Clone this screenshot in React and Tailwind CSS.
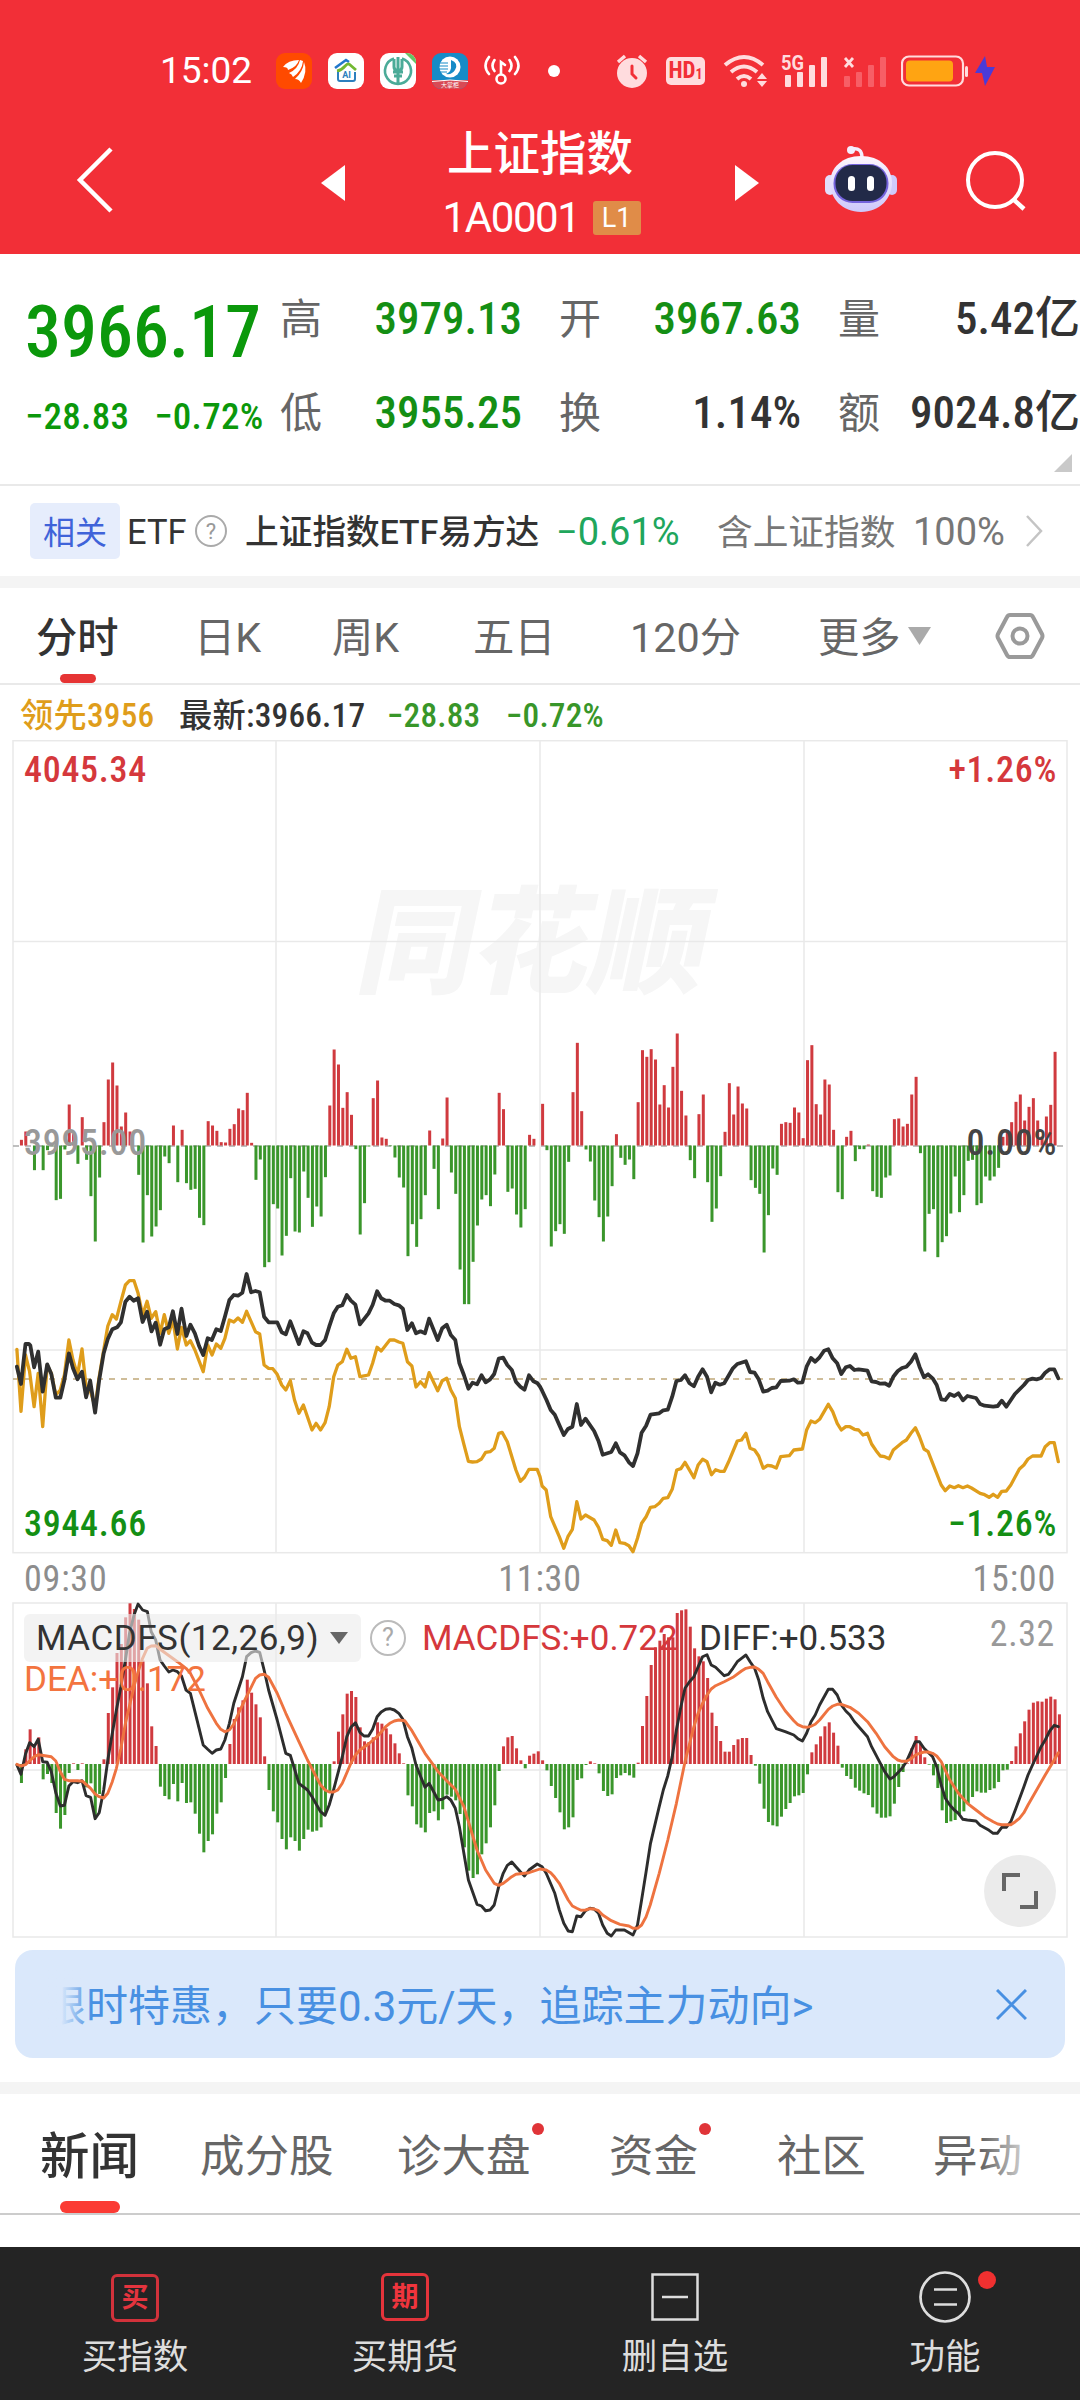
import React, { useState } from 'react';

// Minute by minute market breadth, above zero red, below zero green
const breadth = [
  0, 17, 42, 0, -74, 0, -74, -14, -2, -164, -160, -12, 123, 35, -55, 85, -43, -152, -288, -96,
  70, 198, 249, 180, 57, 99, 42, 0, -88, -291, -149, -273, -243, -194, -33, -53, 60, -110, 47, -113,
  -133, -130, -217, -239, 73, 60, 44, 10, 9, 50, 64, 111, 106, 158, 8, -103, -42, -365, -350, -176,
  -189, -330, -271, -98, -258, -261, -78, -157, -244, -183, -213, -95, 120, 288, 243, 113, 160, 92, -11, -267,
  -173, -3, 142, 195, 24, 20, -2, -36, -96, -126, -332, -236, -304, -221, -149, 45, -70, -191, 21, 144,
  -81, -145, -372, -476, -476, -349, -240, -162, -149, -182, -87, 158, 109, -139, -129, -207, -246, -191, 32, 20,
  0, 125, -14, -303, -257, -236, -265, -49, 160, 308, 103, -12, -48, -165, -215, -288, -213, -122, 34, -37,
  -58, -42, -101, 130, 286, 266, 289, 258, 123, 181, 114, 236, 336, 164, 90, -44, -98, 94, 153, -110,
  -229, -189, -92, 41, 187, 93, 177, 126, 111, -104, -127, -145, -321, -209, -69, -88, 65, 70, 68, 114,
  99, 22, 256, 301, 124, 93, 198, 183, 47, -140, -161, 26, 44, -47, -11, -11, 3, -137, -154, -157,
  -96, -90, 79, 81, 57, 65, 153, 206, -23, -318, -205, -191, -335, -290, -272, -204, -93, -200, -149, -46,
  -43, -179, -173, -93, -105, -93, -67, 26, 44, 70, 131, 153, 75, 116, 142, 75, 27, 87, 122, 281,
];

const macd = [
  0, -57, 44, 104, 50, 80, -46, -30, -57, -147, -194, -153, -27, 2, -18, 2, -70, -58, -160, -90,
  14, 153, 230, 333, 360, 440, 482, 465, 433, 310, 242, 113, 54, -68, -96, -106, -60, -112, -57, -117,
  -115, -149, -209, -265, -231, -211, -149, -115, -42, 60, 135, 170, 191, 253, 214, 179, 140, 23, -78, -142,
  -175, -225, -256, -220, -231, -260, -225, -197, -203, -200, -190, -150, -84, 8, 97, 149, 211, 219, 201, 110,
  68, 66, 80, 125, 121, 107, 89, 62, 32, 2, -94, -127, -181, -191, -205, -147, -142, -169, -136, -92,
  -98, -109, -150, -250, -320, -342, -331, -271, -238, -190, -124, -21, 53, 80, 84, 47, 11, -13, 25, 31,
  38, 11, -19, -66, -102, -145, -196, -190, -160, -48, -43, -3, 8, 2, -28, -81, -96, -91, -42, -34,
  -27, -34, -41, 4, 114, 204, 297, 350, 370, 390, 380, 380, 453, 461, 464, 412, 347, 323, 308, 258,
  154, 114, 69, 37, 37, 57, 74, 78, 78, 27, -5, -59, -134, -174, -184, -187, -158, -135, -117, -97,
  -94, -87, -31, 35, 59, 83, 113, 125, 94, 55, -11, -36, -45, -71, -80, -88, -93, -130, -149, -161,
  -161, -157, -119, -69, -24, 2, 47, 84, 60, 20, -2, -34, -72, -139, -177, -172, -168, -150, -142, -119,
  -99, -82, -86, -86, -78, -73, -54, -19, -17, 9, 53, 92, 128, 163, 184, 188, 187, 196, 202, 194, 149,
];

// Each line is kept as its morning and its afternoon session
const price = [
  '49,380 61,432 74,312 84,312 88,316 99,382 111,335 124,455 137,373 149,402 162,473 175,473 187,420 200,340 212,385 225,418 238,395 250,472 262,422 276,518 288,420 301,340 313,297 326,268 340,262 351,247 364,185 376,170 388,182 401,175 414,246 427,215 440,274 452,248 465,314 477,268 490,262 502,214 515,282 527,206 541,288 553,254 566,280 578,318 590,345 603,295 615,300 628,268 641,273 653,230 666,180 679,165 691,167 704,158 716,102 729,157 742,153 754,157 767,230 780,247 805,247 818,277 830,283 843,244 868,312 881,274 893,280 906,308 918,315 931,315 944,300 956,260 969,220 981,200 994,196 1007,165 1019,182 1032,194 1045,253 1070,220 1082,195 1095,154 1107,175 1120,182 1132,182 1145,192 1158,196 1170,206 1183,270 1196,250 1208,280 1221,274 1234,280 1246,236 1271,300 1284,265 1297,254 1309,285 1322,300 1334,370 1347,405 1360,446 1372,428 1385,433 1398,406 1410,427 1423,418 1435,402 1448,356 1461,353 1473,375 1486,390 1498,425 1511,440 1523,449 1536,406 1549,424 1561,430',
  '0,440 6,452 19,480 31,510 43,524 56,555 69,585 81,567 94,560 107,492 119,555 132,536 157,573 170,603 182,644 207,636 220,610 232,637 245,646 258,667 270,678 283,640 295,578 308,557 321,524 346,520 358,511 371,509 384,470 396,423 409,420 421,406 434,430 447,439 459,410 472,388 485,410 497,457 509,428 522,434 535,430 560,385 573,372 598,364 610,396 623,398 635,418 648,455 661,452 673,444 686,442 699,423 724,422 737,418 749,428 762,427 774,380 787,354 799,365 812,352 825,332 837,328 850,355 863,370 875,402 888,382 900,378 913,390 925,388 951,392 963,424 976,426 988,431 1001,430 1014,437 1026,410 1039,393 1051,384 1064,380 1077,365 1090,343 1102,380 1115,412 1127,403 1140,415 1152,435 1165,478 1177,480 1190,462 1203,468 1215,460 1228,481 1241,468 1266,474 1278,492 1291,497 1316,500 1329,498 1341,482 1354,500 1379,462 1405,435 1417,420 1430,416 1442,418 1455,414 1467,398 1480,388 1493,388 1505,415',
];

const leading = [
  '49,328 61,514 74,345 86,395 99,500 111,400 124,560 137,375 149,400 162,465 175,450 187,405 200,300 212,360 225,405 238,327 250,440 263,455 276,500 288,410 301,330 313,258 326,224 338,237 351,185 364,135 376,122 389,122 401,160 414,225 427,184 439,235 452,215 465,280 477,224 490,280 502,240 515,327 527,262 541,315 553,302 566,330 590,395 603,315 616,345 628,312 641,325 653,295 666,240 679,246 691,234 704,247 716,214 742,275 754,282 767,375 780,385 792,386 805,403 818,435 830,450 843,422 855,480 868,520 881,495 906,570 918,550 931,570 944,548 956,500 969,410 981,375 994,365 1007,328 1019,355 1032,350 1045,410 1070,405 1082,370 1095,322 1107,333 1132,300 1145,300 1158,306 1170,310 1183,365 1196,378 1208,441 1221,425 1234,441 1246,398 1271,452 1284,422 1297,415 1309,450 1322,475 1334,560 1347,613 1360,664 1372,666 1385,665 1398,657 1410,637 1423,635 1435,625 1448,580 1458,577 1473,605 1498,690 1511,724 1523,712 1536,688 1560,688',
  '0,710 6,738 18,750 31,830 56,890 69,925 81,890 94,868 107,785 119,837 132,825 157,840 170,862 182,898 195,902 207,916 220,870 232,908 245,910 258,917 270,935 283,895 295,850 308,830 321,802 333,800 346,790 358,775 371,773 384,748 397,690 409,686 421,667 447,713 459,675 472,658 485,665 498,704 510,689 522,694 535,694 547,667 573,603 585,600 598,580 610,625 623,630 635,648 648,685 661,676 673,678 686,684 699,650 724,647 737,630 762,627 774,570 787,543 799,548 812,538 837,493 850,515 863,550 875,570 888,560 900,560 913,568 925,570 938,585 951,580 963,612 976,632 988,648 1001,650 1014,656 1026,630 1051,608 1064,600 1077,580 1090,563 1102,590 1115,627 1127,635 1165,735 1177,752 1190,738 1203,743 1215,737 1228,743 1241,738 1253,744 1278,760 1291,764 1304,772 1316,763 1329,772 1341,754 1354,753 1367,735 1392,687 1405,675 1417,657 1430,648 1455,648 1467,620 1480,608 1493,608 1505,665',
];

const diff = [
  '49,525 61,553 74,492 86,458 99,470 111,448 124,515 137,517 149,545 162,608 175,648 187,646 200,588 212,575 225,578 238,572 250,617 263,622 276,686 288,668 301,600 313,510 326,430 338,360 351,290 364,210 376,130 389,75 401,42 414,60 428,65 439,125 452,150 465,210 477,228 490,246 502,240 515,245 527,258 540,300 553,310 578,415 590,465 603,478 616,490 628,480 641,477 653,450 666,400 679,340 704,260 716,200 729,188 742,183 754,187 767,240 780,300 805,390 830,490 843,496 868,580 893,600 906,620 931,665 944,676 956,645 969,598 994,500 1007,440 1019,412 1032,398 1045,427 1057,438 1070,438 1082,418 1095,380 1107,366 1120,358 1132,356 1145,360 1158,370 1170,388 1183,440 1196,475 1208,525 1234,592 1246,580 1272,630 1284,628 1297,620 1309,630 1322,655 1334,710 1360,870 1385,943 1398,948 1410,962 1423,960 1435,945 1448,890 1461,850 1473,826 1486,816 1498,830 1511,845 1523,858 1536,840 1560,822',
  '6,830 18,850 43,910 56,960 69,1000 82,1023 94,1025 107,978 119,980 132,962 145,955 157,957 170,970 182,1005 195,1030 207,1038 220,1020 245,1020 270,1035 283,1005 295,930 308,845 321,760 345,655 358,600 371,557 384,500 396,420 409,350 421,295 434,275 447,260 472,200 485,194 497,225 510,232 535,257 547,253 560,235 573,215 585,205 598,195 610,215 623,235 635,270 648,325 661,365 686,416 712,425 737,435 749,446 762,453 774,430 787,395 799,375 812,345 837,298 850,298 863,315 875,345 888,363 900,375 913,395 951,440 963,470 1001,545 1016,567 1026,562 1039,548 1051,535 1064,515 1077,485 1090,455 1102,455 1115,475 1140,500 1152,530 1165,585 1177,625 1190,645 1203,660 1215,670 1228,688 1241,690 1266,693 1278,706 1304,721 1316,730 1328,730 1341,712 1354,712 1367,695 1380,660 1405,590 1417,555 1430,525 1455,470 1467,450 1480,423 1493,406 1505,410',
];

const dea = [
  '49,523 61,528 74,524 99,500 112,494 149,500 162,513 175,545 187,568 200,572 225,572 240,574 263,595 276,612 288,620 301,624 313,610 326,575 338,535 351,475 364,400 389,290 401,245 414,205 427,175 439,168 452,167 465,178 515,215 540,235 553,250 578,300 603,355 628,400 641,418 653,425 666,420 679,402 704,345 729,292 742,265 754,255 767,253 780,262 805,310 830,370 868,455 893,510 918,560 931,585 944,600 956,606 969,606 981,600 994,580 1019,520 1032,495 1045,480 1070,462 1095,440 1120,410 1132,400 1145,393 1158,390 1175,392 1196,422 1234,490 1272,545 1297,572 1322,598 1347,650 1385,780 1410,840 1435,880 1448,886 1461,880 1486,860 1498,853 1523,850 1536,848',
  '0,837 18,840 31,848 43,862 56,880 82,930 94,948 107,955 119,961 132,960 145,956 157,957 170,962 182,975 207,992 232,1003 258,1008 270,1015 283,1015 295,1005 308,980 320,945 346,850 371,750 396,640 421,515 447,410 459,370 472,340 485,315 497,297 510,287 535,275 560,262 585,243 598,235 610,232 623,231 635,238 648,250 661,275 686,322 712,362 737,392 749,404 762,410 774,412 787,409 799,403 812,390 837,358 850,348 863,343 875,343 900,352 925,370 951,395 976,430 1001,470 1026,500 1039,510 1051,514 1064,514 1077,507 1090,495 1102,490 1115,486 1127,486 1140,490 1152,498 1165,515 1190,570 1215,610 1241,640 1266,660 1291,680 1316,695 1329,702 1341,704 1367,704 1380,695 1392,685 1405,668 1417,645 1442,600 1467,555 1493,510 1505,488',
];

// session units -> chart pixels
const UNIT = 1080 / 3136;
const toPoints = ([morning, afternoon], top) => {
  const read = (s, dx) =>
    s.split(' ').map((p) => {
      const [x, y] = p.split(',').map(Number);
      return `${((x + dx) * UNIT).toFixed(1)},${(y / 3 + top).toFixed(1)}`;
    });
  return [...read(morning, 0), ...read(afternoon, 1568)].join(' ');
};

const Bars = ({ data, zero }) => (
  <g>
    {data.map((v, i) =>
      v === 0 ? null : (
        <rect
          key={i}
          x={15.6 + i * 4.343}
          y={v > 0 ? zero - v / 3 : zero}
          width="3"
          height={Math.abs(v) / 3}
          fill={v > 0 ? '#d03a3f' : '#3a962b'}
        />
      )
    )}
  </g>
);

const Line = ({ data, top, color, width }) => (
  <polyline
    points={toPoints(data, top)}
    fill="none"
    stroke={color}
    strokeWidth={width}
    strokeLinejoin="round"
    strokeLinecap="round"
  />
);

const StatusBar = () => (
  <div className="flex h-[112px] items-center pt-[30px] pl-[160px] text-white">
    <span className="w-[116px] text-[37px] leading-[40px]">15:02</span>
    <svg className="mr-4 h-9 w-9" viewBox="0 0 36 36">
      <rect width="36" height="36" rx="9" fill="#ff4a00" />
      <path d="M7 14q5-7 16-7-2 7-11 10 0-3-5-3z" fill="#fff" />
      <path d="M13 20q9-4 11-13l3 1q-1 10-10 16-1-3-4-4z" fill="#fff" />
      <path d="M19 26q8-7 9-17 4 10-3 21-2-4-6-4z" fill="#fff" />
    </svg>
    <svg className="mr-4 h-9 w-9" viewBox="0 0 36 36">
      <rect width="36" height="36" rx="9" fill="#fff" />
      <path d="M7 15 18 7l3 2" fill="none" stroke="#2277cc" strokeWidth="2.6" />
      <path d="M9 18c8-1 8-8 12-7l7 6" fill="none" stroke="#72b832" strokeWidth="2.8" />
      <path d="M10 19v7q0 2 2 2h13q2 0 2-2v-7" fill="none" stroke="#2c7fbe" strokeWidth="2" />
      <text x="18.5" y="25" textAnchor="middle" fontSize="9" fontWeight="700" fill="#2c7fbe">AI</text>
    </svg>
    <svg className="mr-4 h-9 w-9" viewBox="0 0 36 36">
      <rect width="36" height="36" rx="9" fill="#fff" />
      <path d="M14 5.500A13 13 0 1 0 22 5.500" fill="none" stroke="#4bab98" strokeWidth="2.600" />
      <path d="M18 4v27M14 6v8q0 3 4 4 4-1 4-4V6M13 19h10M14 23h8" fill="none" stroke="#4bab98" strokeWidth="3" />
      <path d="M25 0h2a9 9 0 0 1 9 9v2z" fill="#65c466" />
    </svg>
    <svg className="mr-4 h-9 w-9" viewBox="0 0 36 36">
      <rect width="36" height="36" rx="9" fill="#168bc7" />
      <path d="M0 27h36a9 9 0 0 1-9 9H9a9 9 0 0 1-9-9z" fill="#d84a55" />
      <path d="M0 28.500q18-3 36 0" stroke="#fff" fill="none" />
      <circle cx="18" cy="14" r="10.500" fill="#fff" />
      <path d="M19 7q8 3 4 10-3 5-9 4 6-3 5-8z" fill="#168bc7" />
      <path d="M8 10h8M7 13h9M7 16h9M8 19h7" stroke="#168bc7" strokeWidth="1.200" />
      <text x="18" y="34" textAnchor="middle" fontSize="6" fill="#fff">大掌柜</text>
    </svg>
    <svg className="mr-[28px] h-9 w-9" viewBox="0 0 36 36" fill="none" stroke="#fff" strokeWidth="2.600" strokeLinecap="round">
      <path d="M5 4q-7 9 0 17M10.500 7q-4 6 0 11M31 4q7 9 0 17M25.500 7q4 6 0 11" />
      <circle cx="17" cy="26" r="4.500" />
      <path d="M17 21V9l4 3" />
    </svg>
    <span className="h-3 w-3 rounded-full bg-white" />
    <svg className="ml-[56px] h-[34px] w-8" viewBox="0 0 32 34">
      <circle cx="16" cy="19" r="15" fill="#ffdcde" />
      <path d="M2 8 9 2M23 2l7 6" stroke="#ffdcde" strokeWidth="3.400" />
      <path d="M16 12v8l4 4" fill="none" stroke="#f22f37" strokeWidth="3" strokeLinecap="round" />
    </svg>
    <span className="ml-[18px] flex h-[28px] w-[39px] items-center justify-center rounded-[5px] bg-[#ffdcde] text-[23px] font-bold text-[#f22f37] font-stretch-semi-condensed">
      HD<span className="pt-1.5 text-[14px]">1</span>
    </span>
    <svg className="ml-[18px] h-[34px] w-[45px]" viewBox="0 0 45 34" fill="none" stroke="#ffdcde" strokeWidth="4">
      <path d="M2 11q19-16 38 0M8 18q13-11 26 0M14 25q7-6 14 0" />
      <circle cx="21" cy="30" r="3" fill="#ffdcde" stroke="none" />
      <path d="m39 19 5 6H34zM39 33l5-6H34z" fill="#ffdcde" stroke="none" />
    </svg>
    <svg className="ml-[13px] h-[34px] w-[47px] overflow-visible" viewBox="0 0 47 34" fill="#ffdcde">
      <text x="0" y="15.500" fontSize="20" fontWeight="700" textLength="23" lengthAdjust="spacingAndGlyphs">5G</text>
      <rect x="4" y="21" width="6" height="12" rx="1" />
      <rect x="16" y="18" width="6" height="15" rx="1" />
      <rect x="28" y="11" width="6" height="22" rx="1" />
      <rect x="40" y="3" width="6" height="30" rx="1" />
    </svg>
    <svg className="ml-[15px] h-[34px] w-[45px]" viewBox="0 0 45 34">
      <path d="m2 4 8 9M10 4l-8 9" stroke="#ffdcde" strokeWidth="2.800" />
      <g fill="#f75e66">
        <rect x="1" y="22" width="6" height="11" rx="1" />
        <rect x="13" y="18" width="6" height="15" rx="1" />
        <rect x="25" y="11" width="6" height="22" rx="1" />
        <rect x="37" y="3" width="6" height="30" rx="1" />
      </g>
    </svg>
    <svg className="ml-[13px] h-8 w-[68px]" viewBox="0 0 68 32">
      <rect x="1" y="1.500" width="61" height="29" rx="7" fill="none" stroke="#ffdcde" strokeWidth="2.200" />
      <rect x="5" y="5.500" width="47" height="21" rx="4" fill="#ffa412" />
      <rect x="64" y="11" width="3" height="11" rx="1.500" fill="#ffdcde" />
    </svg>
    <svg className="ml-[6px] h-8 w-5" viewBox="0 0 20 32">
      <path d="M10 1 0 18h7l3 13L20 12h-8z" fill="#4b3bd8" />
    </svg>
  </div>
);

const TitleBar = () => (
  <div className="flex h-[142px] items-center pl-[76px]">
    <svg className="mb-[7px] h-[66px] w-[37px]" viewBox="0 0 37 66">
      <path d="M35 2 4 33l31 31" fill="none" stroke="#fff" strokeWidth="4.500" />
    </svg>
    <svg className="ml-[208px] h-9 w-6" viewBox="0 0 24 36">
      <path d="M24 0v36L0 18z" fill="#fff" />
    </svg>
    <div className="flex h-full w-[390px] flex-col items-center pt-3 text-white">
      <h1 className="h-[72px] text-[46.5px] leading-[60px] font-medium">上证指数</h1>
      <div className="flex items-center gap-[13px] pl-[3px]">
        <span className="text-[42px] leading-[44px] tracking-[-1.4px]">1A0001</span>
        <span className="flex h-[34px] w-[48px] items-center justify-center rounded-[3px] bg-[#e08c48] text-[27px]">L1</span>
      </div>
    </div>
    <svg className="h-9 w-6" viewBox="0 0 24 36">
      <path d="M0 0v36l24-18z" fill="#fff" />
    </svg>
    <svg className="mb-[8px] ml-[66px] h-[68px] w-[72px]" viewBox="0 0 72 68">
      <defs>
        <linearGradient id="shell" x1="0" y1="0" x2="0" y2="1">
          <stop offset="0" stopColor="#fdf5fd" />
          <stop offset="1" stopColor="#cdc8fb" />
        </linearGradient>
      </defs>
      <rect x="0" y="30" width="10" height="20" rx="5" fill="#e2defb" />
      <rect x="62" y="30" width="10" height="20" rx="5" fill="#cfcafb" />
      <path d="M27 4q10-2 10 9" fill="none" stroke="#f4eefe" strokeWidth="3.500" />
      <circle cx="26" cy="5" r="4" fill="#f4eefe" />
      <path d="M36 11c19 0 31 12 31 27S55 67 36 67 5 53 5 38s12-27 31-27z" fill="url(#shell)" />
      <rect x="8.500" y="19" width="55" height="39" rx="19" fill="#7463dc" />
      <rect x="10.500" y="20" width="51" height="36" rx="17" fill="#222a48" />
      <rect x="23" y="31" width="7" height="15" rx="3.500" fill="#fff" />
      <rect x="42" y="31" width="7" height="15" rx="3.500" fill="#fff" />
    </svg>
    <svg className="mb-[4px] ml-[68px] h-[62px] w-[62px]" viewBox="0 0 62 62" fill="none" stroke="#fff" strokeWidth="4">
      <circle cx="30" cy="30" r="27" />
      <path d="m48 49 11 10" strokeWidth="4.500" />
    </svg>
  </div>
);

const Stat = ({ label, value, className }) => (
  <div className="flex h-[94px] items-center justify-between">
    <span className="pt-[5px] text-[42px] text-[#666]">{label}</span>
    <span className={`pt-[4px] text-[45px] font-medium whitespace-nowrap font-stretch-semi-condensed ${className}`}>{value}</span>
  </div>
);

const Quote = () => (
  <section className="relative flex h-[232px] border-b-2 border-[#e9e9e9] pt-[16px]">
    <div className="w-[280px] pl-[25px] text-[#0b980b]">
      <div className="h-[119px] pt-[21px] text-[72px] leading-[84px] font-medium whitespace-nowrap font-stretch-semi-condensed">
        3966.17
      </div>
      <div className="flex gap-[25px] pt-[2px] text-[37px] leading-[52px] font-medium tracking-[0.3px] whitespace-nowrap font-stretch-semi-condensed">
        <span>−28.83</span>
        <span>−0.72%</span>
      </div>
    </div>
    <div className="w-[242px]">
      <Stat label="高" value="3979.13" className="text-[#148f14]" />
      <Stat label="低" value="3955.25" className="text-[#148f14]" />
    </div>
    <div className="ml-[37px] w-[242px]">
      <Stat label="开" value="3967.63" className="text-[#148f14]" />
      <Stat label="换" value="1.14%" className="text-[#333]" />
    </div>
    <div className="ml-[37px] w-[242px]">
      <Stat label="量" value="5.42亿" className="text-[#333]" />
      <Stat label="额" value="9024.8亿" className="text-[#333]" />
    </div>
    <svg className="absolute right-[8px] bottom-[12px] h-[18px] w-[18px]" viewBox="0 0 18 18">
      <path d="M18 0v18H0z" fill="#c9c9c9" />
    </svg>
  </section>
);

const EtfRow = () => (
  <section className="flex h-[90px] items-center pl-[30px] whitespace-nowrap">
    <span className="flex h-[56px] w-[90px] items-center justify-center rounded-[5px] bg-[#e6edfc] pt-[3px] text-[32px] text-[#3f63d9]">相关</span>
    <span className="ml-[7px] w-[68px] pt-[3px] text-[34.5px] text-[#333]">ETF</span>
    <span className="flex h-8 w-8 items-center justify-center rounded-full border-2 border-[#aaa] text-[22px] text-[#999]">?</span>
    <span className="ml-[18px] w-[311px] pt-[5px] text-[33.7px] font-medium text-[#333]">上证指数ETF易方达</span>
    <span className="w-[161px] pt-[3px] text-[38px] text-[#20a65c]">−0.61%</span>
    <span className="w-[196px] pt-[5px] text-[35.7px] text-[#777]">含上证指数</span>
    <span className="w-[112px] pt-[3px] text-[38px] text-[#777]">100%</span>
    <svg className="h-8 w-[18px]" viewBox="0 0 18 32">
      <path d="m2 1 14 15L2 31" fill="none" stroke="#c4c4c4" strokeWidth="2.500" />
    </svg>
  </section>
);

const PERIODS = [
  { name: '分时', width: 'w-[158px]' },
  { name: '日K', width: 'w-[138px]' },
  { name: '周K', width: 'w-[141px]' },
  { name: '五日', width: 'w-[157px]' },
  { name: '120分', width: 'w-[188px]' },
  { name: '更多', width: 'w-[90px]' },
];

const PeriodTabs = () => {
  const [period, setPeriod] = useState('分时');

  return (
    <nav className="flex h-[97px] items-center border-b-2 border-[#e9e9e9] pl-[36px]">
      {PERIODS.map((p) => (
        <button
          key={p.name}
          onClick={() => setPeriod(p.name)}
          className={`relative h-full pt-[7px] text-left text-[41.3px] whitespace-nowrap ${p.width} ${
            period === p.name ? 'font-medium text-[#333]' : 'text-[#666]'
          }`}
        >
          {p.name}
          {period === p.name && (
            <span className="absolute bottom-0 left-[24px] h-[9px] w-9 rounded-full bg-[#e63434]" />
          )}
        </button>
      ))}
      <svg className="h-[18px] w-[23px]" viewBox="0 0 23 18">
        <path d="M0 0h23L11.500 18z" fill="#aaa" />
      </svg>
      <svg className="ml-[64px] h-[46px] w-[50px]" viewBox="0 0 50 46" fill="none" stroke="#9a9a9a" strokeWidth="4">
        <path d="M15 2h20q2 0 3 2l9 17q1 2 0 4l-9 17q-1 2-3 2H15q-2 0-3-2L3 25q-1-2 0-4l9-17q1-2 3-2z" />
        <circle cx="25" cy="23" r="7.500" />
      </svg>
    </nav>
  );
};

const PriceChart = () => (
  <section className="relative h-[862px]">
    <div className="absolute top-[144px] left-[362px] -skew-x-12 text-[116px] leading-[120px] font-black text-[#f6f6f6]">同花顺</div>
    <svg className="relative block h-[815px] w-full" viewBox="0 0 1080 815">
      <g stroke="#e9e9e9" strokeWidth="1.500" fill="none">
        <rect x="13" y="0.700" width="1054" height="812" />
        <path d="M276 0v812M540 0v812M804 0v812M13 201.500h1054M13 610h1054" />
      </g>
      <path d="M13 406h1054" stroke="#aaa" strokeWidth="1.500" strokeDasharray="6 6" />
      <Bars data={breadth} zero={405.5} />
      <path d="M13 639h1054" stroke="#c0a878" strokeWidth="1.500" strokeDasharray="6 6" />
      <Line data={leading} top={500} color="#df9d1b" width="3.3" />
      <Line data={price} top={500} color="#303030" width="3.8" />
    </svg>
    <div className="absolute inset-x-[24px] top-0 -mr-px flex h-[812px] flex-col justify-between pt-[8px] pb-[6px] text-[36px] leading-[44px] font-medium tracking-[0.7px] font-stretch-semi-condensed">
      <div className="flex justify-between text-[#d5383c]">
        <span>4045.34</span>
        <span>+1.26%</span>
      </div>
      <div className="flex justify-between pb-[8px]">
        <span className="text-[#999]">3995.00</span>
        <span className="text-[#444]">0.00%</span>
      </div>
      <div className="flex justify-between text-[#148f14]">
        <span>3944.66</span>
        <span>−1.26%</span>
      </div>
    </div>
    <div className="flex justify-between px-[24px] pt-[2px] text-[36px] leading-[44px] tracking-[0.8px] text-[#8d8d8d] font-stretch-semi-condensed">
      <span>09:30</span>
      <span>11:30</span>
      <span>15:00</span>
    </div>
  </section>
);

const MacdChart = () => (
  <section className="relative h-[348px]">
    <svg className="block h-[338px] w-full" viewBox="0 0 1080 338">
      <g stroke="#e9e9e9" strokeWidth="1.500" fill="none">
        <rect x="13" y="1" width="1054" height="334" />
        <path d="M276 1v334M540 1v334M804 1v334M13 168h1054" />
      </g>
      <Bars data={macd} zero={162} />
      <Line data={diff} top={-12} color="#2d2d2d" width="2.9" />
      <Line data={dea} top={-12} color="#ee7340" width="2.9" />
    </svg>
    <div className="absolute top-[12px] left-[24px] flex h-[48px] items-center text-[35px] whitespace-nowrap">
      <div className="flex h-full w-[337px] items-center rounded-md bg-[#ebebeb]/60 pl-[12px] text-[#333]">
        <span className="w-[294px] pt-[3px] tracking-[0.5px]">MACDFS(12,26,9)</span>
        <svg className="h-3 w-[18px]" viewBox="0 0 18 12">
          <path d="M0 0h18L9 12z" fill="#666" />
        </svg>
      </div>
      <span className="ml-[9px] flex h-9 w-9 items-center justify-center rounded-full border-[2.5px] border-[#bbb] text-[25px] text-[#aaa]">?</span>
      <span className="ml-[16px] w-[277px] pt-[3px] text-[#d5383c]">MACDFS:+0.722</span>
      <span className="pt-[3px] text-[#333]">DIFF:+0.533</span>
    </div>
    <div className="absolute top-[56px] left-[24px] text-[35px] leading-[44px] text-[#f3743f]">DEA:+0.172</div>
    <div className="absolute top-[10px] right-[25px] text-[36px] leading-[44px] tracking-[0.6px] text-[#999] font-stretch-semi-condensed">2.32</div>
    <button className="absolute top-[253px] right-[24px] flex h-[72px] w-[72px] items-center justify-center rounded-full bg-[#ebebeb]">
      <svg className="h-[38px] w-[38px]" viewBox="0 0 38 38" fill="none" stroke="#666" strokeWidth="4">
        <path d="M3 19V3h16M35 19v16H19" />
      </svg>
    </button>
  </section>
);

const Promo = () => {
  const [open, setOpen] = useState(true);
  if (!open) return null;

  return (
    <section className="mx-[15px] flex h-[108px] items-center justify-between rounded-[18px] bg-[#dae8fb] pr-[38px] pl-[29px] text-[#4890e2]">
      <div className="relative pt-[5px]">
        <span className="text-[42px] whitespace-nowrap">限时特惠，只要0.3元/天，追踪主力动向&gt;</span>
        <span className="absolute inset-y-0 left-0 w-[48px] bg-linear-to-r from-[#dae8fb] from-35% to-[#dae8fb]/0" />
      </div>
      <button onClick={() => setOpen(false)}>
        <svg className="h-[31px] w-[31px]" viewBox="0 0 31 31">
          <path d="m1 1 29 29M30 1 1 30" stroke="#4890e2" strokeWidth="3" />
        </svg>
      </button>
    </section>
  );
};

const SECTIONS = [
  { name: '新闻', width: 'w-[160px]' },
  { name: '成分股', width: 'w-[197px]' },
  { name: '诊大盘', width: 'w-[212px]', dot: true, dotPos: 'left-[135px]' },
  { name: '资金', width: 'w-[168px]', dot: true, dotPos: 'left-[90px]' },
  { name: '社区', width: 'w-[156px]' },
  { name: '异动', width: 'w-[92px]' },
];

const SectionTabs = () => {
  const [section, setSection] = useState('新闻');

  return (
    <nav className="relative flex h-[121px] border-b-2 border-[#ccc] pl-[40px]">
      {SECTIONS.map((s) => (
        <button
          key={s.name}
          onClick={() => setSection(s.name)}
          className={`relative h-full pt-[8px] text-left whitespace-nowrap ${s.width} ${
            section === s.name ? 'text-[49.5px] font-medium text-[#333]' : 'text-[44.5px] text-[#666]'
          }`}
        >
          {s.name}
          {s.dot && <span className={`absolute top-[29px] h-3 w-3 rounded-full bg-[#e03438] ${s.dotPos}`} />}
          {section === s.name && (
            <span className="absolute bottom-0 left-[20px] h-3 w-[60px] rounded-full bg-[#fb3b34]" />
          )}
        </button>
      ))}
      <span className="absolute top-0 right-[50px] h-full w-12 bg-linear-to-r from-white/0 to-white/80" />
    </nav>
  );
};

const NavItem = ({ label, children }) => (
  <button className="flex flex-1 flex-col items-center pt-[24px] text-[35.5px] leading-[44px] text-[#ddd]">
    <span className="relative mb-[12px] flex h-[52px] w-[52px] items-center justify-center">{children}</span>
    {label}
  </button>
);

const BottomNav = () => (
  <nav className="mt-[32px] flex h-[153px] bg-[#242424]">
    <NavItem label="买指数">
      <span className="mt-[2px] flex h-12 w-12 items-center justify-center rounded-md border-3 border-[#d2323b] text-[27px] leading-none font-bold text-[#e5343e]">买</span>
    </NavItem>
    <NavItem label="买期货">
      <span className="flex h-12 w-12 items-center justify-center rounded-md border-3 border-[#e5343b] text-[27px] leading-none font-bold text-[#f0353d]">期</span>
    </NavItem>
    <NavItem label="删自选">
      <svg className="h-12 w-12" viewBox="0 0 48 48" fill="none" stroke="#ddd" strokeWidth="2.500">
        <rect x="1.500" y="1.500" width="45" height="45" />
        <path d="M11 24h26" />
      </svg>
    </NavItem>
    <NavItem label="功能">
      <svg className="h-[52px] w-[52px]" viewBox="0 0 52 52" fill="none" stroke="#ddd" strokeWidth="2.700">
        <circle cx="26" cy="26" r="24.500" />
        <path d="M15 18.500h23M15 33.500h23" />
      </svg>
      <span className="absolute top-0 left-[59px] h-[18px] w-[18px] rounded-full bg-[#f03030]" />
    </NavItem>
  </nav>
);

const App = () => (
  <div className="h-[2400px] w-[1080px] overflow-hidden bg-white font-[Roboto,'Noto_Sans_CJK_SC',sans-serif]">
    <header className="bg-[#f22f37]">
      <StatusBar />
      <TitleBar />
    </header>
    <Quote />
    <EtfRow />
    <div className="h-3 bg-[#f4f4f4]" />
    <PeriodTabs />
    <div className="flex h-[55px] items-center pt-[6px] pl-[20px] text-[33.3px] font-medium tracking-[0.2px] whitespace-nowrap font-stretch-semi-condensed">
      <span className="w-[159px] text-[#df9d1b]">领先3956</span>
      <span className="w-[208px] text-[#333]">最新:3966.17</span>
      <span className="w-[119px] text-[#389629]">−28.83</span>
      <span className="text-[#389629]">−0.72%</span>
    </div>
    <PriceChart />
    <MacdChart />
    <Promo />
    <div className="mt-[24px] h-3 bg-[#f4f4f4]" />
    <SectionTabs />
    <BottomNav />
  </div>
);

export default App;
